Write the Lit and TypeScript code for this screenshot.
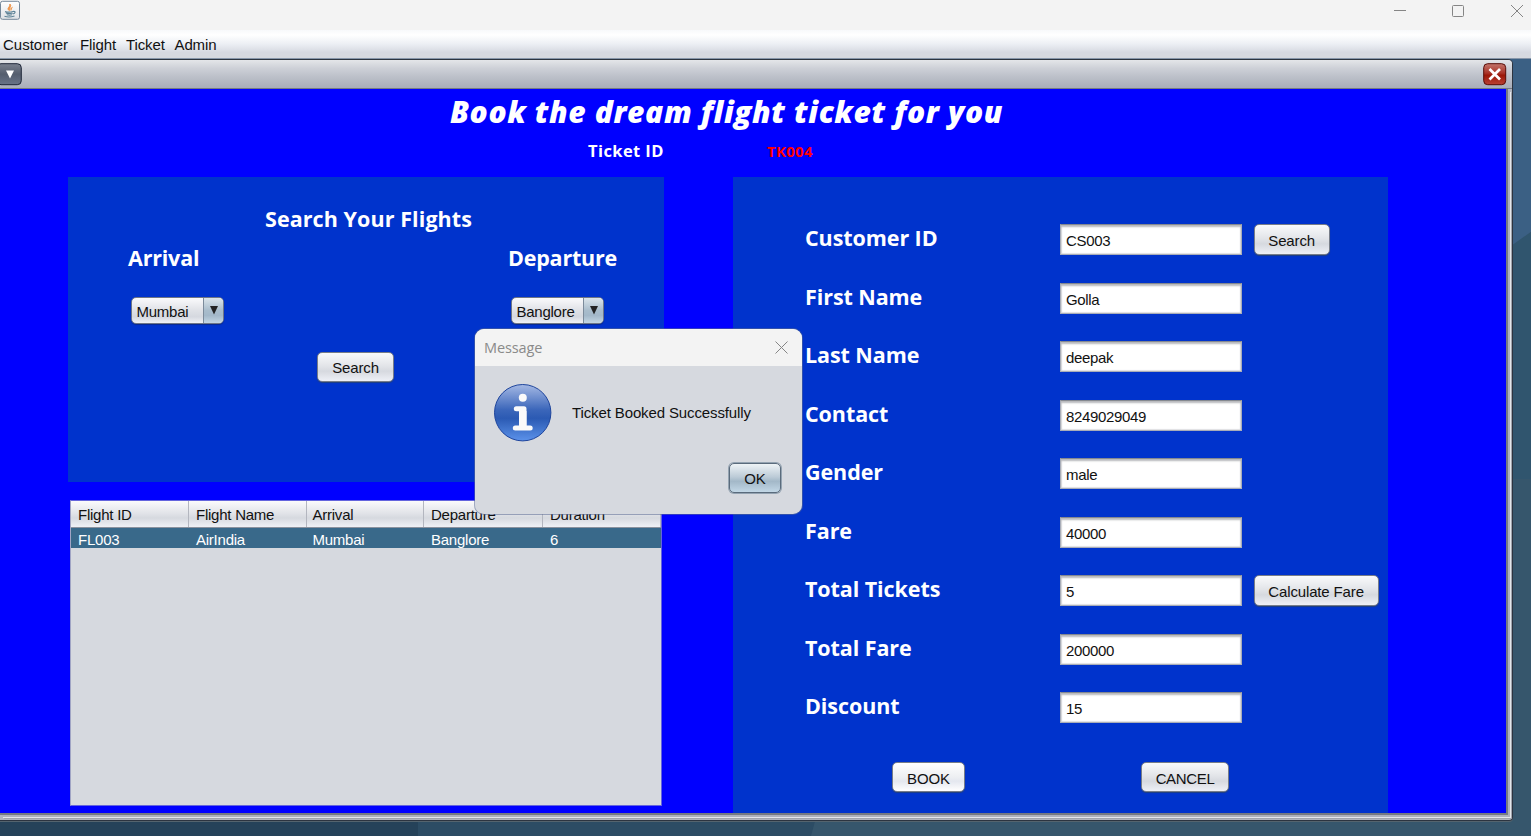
import { LitElement, html, css, svg } from "lit";
import { customElement } from "lit/decorators.js";

const FIELDS: { label: string; value: string; action?: string }[] = [
  { label: "Customer ID", value: "CS003", action: "Search" },
  { label: "First Name", value: "Golla" },
  { label: "Last Name", value: "deepak" },
  { label: "Contact", value: "8249029049" },
  { label: "Gender", value: "male" },
  { label: "Fare", value: "40000" },
  { label: "Total Tickets", value: "5", action: "Calculate Fare" },
  { label: "Total Fare", value: "200000" },
  { label: "Discount", value: "15" },
];
const HEADS = ["Flight ID", "Flight Name", "Arrival", "Departure", "Duration"];
const ROW = ["FL003", "AirIndia", "Mumbai", "Banglore", "6"];
const arrow = svg`<path d="M0 0H8L4 8.5Z" fill="#222"/>`;

@customElement("app-root")
export class AppRoot extends LitElement {
  static styles = css`
    :host { display: block; width: 1531px; height: 836px; overflow: hidden; font: 15px/18px "Liberation Sans", Arial, sans-serif; color: #111; }
    * { box-sizing: border-box; }
    svg { display: block; }
    .app { position: relative; height: 836px; display: flex; flex-direction: column; }
    .titlebar { height: 30px; background: #f3f3f3; display: flex; justify-content: space-between; }
    .controls { display: flex; gap: 46px; padding: 5px 8px 0 0; }
    .controls svg { overflow: visible; }
    .menubar { height: 29px; padding: 6px 0 0 3px; display: flex; border-bottom: 1px solid #8796aa; background: linear-gradient(#f8f9fb 0, #fff 18%, #eceff4 50%, #d6d9e1 80%, #d6d9df 100%); white-space: nowrap; letter-spacing: -0.12px; }
    .menubar span:nth-child(1) { width: 77px; letter-spacing: 0; }
    .menubar span:nth-child(2) { width: 46px; }
    .menubar span:nth-child(3) { width: 48.5px; }
    .desktop { flex: 1; position: relative; overflow: hidden; background: #36566e; }
    .wall { position: absolute; inset: 0; }
    .frame { position: relative; width: 1513px; height: 762px; border: solid #2c3440; border-width: 1px 1px 1px 0; border-radius: 0 5px 4px 0; background: #b0b4bf; box-shadow: 0 1px 0 #54646e; overflow: hidden; padding-right: 4px; }
    .frame-title { height: 29px; margin-right: -4px; display: flex; justify-content: space-between; padding: 3px 5px 0 0; background: linear-gradient(#e4e6e9 0, #cdd0d7 30%, #bcc0c9 60%, #a9aeb9 100%); border-bottom: 1px solid #757a84; }
    .content { height: 726px; border: solid #767a82; border-width: 0 2px 2px 0; background: #00f; display: grid; grid-template-columns: 596px 655px; grid-template-rows: 88px 636px; column-gap: 69px; padding-left: 68px; color: #fff; font-family: "Open Sans", "Noto Sans", sans-serif; font-weight: 700; box-shadow: 2px 2px 0 #adb1bc, 3px 3px 0 #e4e6ea, 4px 4px 0 #a0a4ad; }
    .banner { grid-column: 1 / 3; }
    .headline { font-style: italic; font-weight: 800; font-size: 30px; line-height: 40px; letter-spacing: 0.6px; padding: 3px 0 0 382px; white-space: nowrap; }
    .ticket { display: flex; padding: 8px 0 0 520px; line-height: 22px; font-size: 16.5px; }
    .ticket span { width: 179px; white-space: nowrap; letter-spacing: 0.4px; }
    .ticket .code { color: #f00; font-size: 15px; letter-spacing: 0.3px; }
    .left { display: flex; flex-direction: column; gap: 17px; }
    .search { height: 305px; background: #03c; font-size: 21.5px; line-height: 30px; display: flex; flex-direction: column; letter-spacing: -0.2px; }
    .search h2 { margin: 0; font: inherit; padding: 27px 0 0 197px; white-space: nowrap; letter-spacing: 0.08px; }
    .places { display: flex; padding: 9px 0 0 60px; gap: 287px; }
    .places > div { width: 93px; display: flex; flex-direction: column; gap: 24px; white-space: nowrap; }
    .combo { width: 93px; height: 27px; margin-left: 3px; border: 1px solid #6e7686; border-radius: 5px; display: flex; overflow: hidden; font: 15px/28px "Liberation Sans", Arial, sans-serif; letter-spacing: -0.25px; color: #111; background: linear-gradient(#fafafc, #dfe1e6 50%, #d5d8df 75%, #f0f2f6); box-shadow: 0 1px 1px #0a2a8c; padding-left: 4.5px; }
    .combo span { flex: 1; }
    .combo i { width: 20px; padding: 8px 0 0 6px; border-left: 1px solid #7c8b9b; background: linear-gradient(#dce5eb, #a8bccb 50%, #a3b8c9 70%, #c3d6e4); }
    .btn { height: 30px; border: 1px solid #777d88; border-radius: 5px; font: 15px/31px "Liberation Sans", Arial, sans-serif; letter-spacing: -0.14px; color: #111; text-align: center; white-space: nowrap; background: linear-gradient(#f9fafb 0, #e3e5e9 45%, #d6d9df 65%, #eef0f6 100%); box-shadow: 0 1px 1px #21417f; }
    .search .btn { width: 77px; margin: 28px 0 0 249px; line-height: 30px; }
    .table { height: 306px; width: 592px; margin: 1px 0 0 2px; background: #d6d9df; border: 1px solid #6464de; border-left: 1px solid #a0a4c4; font: 15px/18px "Liberation Sans", Arial, sans-serif; letter-spacing: -0.24px; color: #111; }
    .tr { display: grid; grid-template-columns: 118px 118px 117px 119px 1fr; }
    .tr span { padding-left: 7px; white-space: nowrap; }
    .tr span:nth-child(3) { padding-left: 5.5px; }
    .th { height: 27px; overflow: hidden; border-bottom: 1px solid #8b929e; background: linear-gradient(#fbfbfc, #e1e3e8 48%, #d6d9df 65%, #eff1f6); line-height: 28px; }
    .th span { border-right: 1px solid #b3b6bf; }
    .td { height: 20px; background: #39698a; color: #fff; line-height: 24px; overflow: hidden; }
    .form { background: #03c; padding: 47.1px 0 0 72px; }
    .row { height: 58.56px; display: grid; grid-template-columns: 255px 182px 1fr; align-items: start; }
    .row label { font-size: 21.5px; line-height: 28px; letter-spacing: -0.08px; white-space: nowrap; }
    .field { height: 31px; border: 1px solid #a8adb8; border-top-color: #858990; background: #fff; box-shadow: inset 0 2px 2px #b8b9bc, inset 0 0 1px 1px #e0e0e3; font: 15px/32px "Liberation Sans", Arial, sans-serif; letter-spacing: -0.33px; color: #111; padding-left: 5px; }
    .row .btn { justify-self: start; margin-left: 11.5px; padding: 0 13.8px; height: 31px; }
    .actions { display: flex; gap: 176px; padding: 11px 0 0 87px; }
    .actions .btn { width: 73px; }
    .actions .btn + .btn { width: 88px; letter-spacing: -0.35px; }
    .actions .hot { background: linear-gradient(#fff, #edeff2 50%, #e4e7ef 65%, #fff); }
    .dialog { position: absolute; left: 475px; top: 329px; width: 327px; height: 185px; border-radius: 9px; background: #d6d9df; overflow: hidden; box-shadow: 0 0 0 1px rgba(90, 105, 145, 0.55); }
    .dialog header { height: 37px; background: #f3f3f3; color: #8a8a8a; display: flex; justify-content: space-between; padding: 9px 14.5px 0 9px; font: 14.5px/19px "Open Sans", "Noto Sans", sans-serif; letter-spacing: -0.1px; }
    .dialog header svg { margin-top: 3px; }
    .message { display: flex; gap: 19px; padding: 17px 0 0 18px; line-height: 60px; white-space: nowrap; letter-spacing: -0.12px; }
    .ok { width: 52px; margin: 20px 0 0 254px; line-height: 29px; border: 1px solid #5a6b7c; background: linear-gradient(#eef3f6, #bccbd7 46%, #a3b8c8 62%, #c2d7e6); box-shadow: 0 0 0 1px #94a3b1; }
  `;

  render() {
    return html`<div class="app">
      <div class="titlebar">
        <svg width="21" height="21" viewBox="0 0 21 21">
          <defs><linearGradient id="jb" x1="0" y1="0" x2="0" y2="1"><stop stop-color="#fff" /><stop offset="1" stop-color="#dfe2e6" /></linearGradient></defs>
          <rect x=".5" y="1.3" width="19" height="18" rx="2" fill="url(#jb)" stroke="#75889a" />
          <path d="M9.4 10.6C5.6 8.6 10.8 6.8 9.8 4C12.4 6 8.4 7.8 10 10.6M11.2 10.3C10.4 8.6 11 8 12.5 7.2" fill="#ee9448" stroke="#ee9448" />
          <path d="M5 11.6Q9 12.8 13 11.5M6 13Q9 14.4 12.5 13M6.8 14.8Q9.5 15.7 12 14.8M13 11.5C16 11 15.5 13.5 12.8 14M4.5 16.2Q9 17.8 14.5 16" fill="none" stroke="#5d8296" stroke-width="1.15" />
        </svg>
        <div class="controls">
          <svg width="12" height="12" stroke="#858585" fill="none"><path d="M-1 5.5H11" /></svg>
          <svg width="12" height="12" stroke="#858585" fill="none"><rect x="-.5" y=".5" width="11" height="11" rx="1" /></svg>
          <svg width="12" height="12" stroke="#858585" fill="none"><path d="M0 0L12 12M12 0L0 12" /></svg>
        </div>
      </div>
      <div class="menubar"><span>Customer</span><span>Flight</span><span>Ticket</span><span>Admin</span></div>
      <div class="desktop">
        <svg class="wall" width="1531" height="777">
          <rect width="1531" height="777" fill="#36566c" />
          <path d="M1500 0H1531V173L1500 195Z" fill="#3b6084" />
          <path d="M1500 195L1531 173V777H1500Z" fill="#30556e" />
          <path d="M1500 420H1531V777H1500Z" fill="#36566c" />
          <path d="M0 755H418V777H0Z" fill="#254259" />
          <path d="M418 755H817L811 777H418Z" fill="#2c4c64" />
        </svg>
        <div class="frame">
          <div class="frame-title">
            <svg width="22" height="23" viewBox="0 0 22 23">
              <defs><linearGradient id="mb" x1="0" y1="0" x2="0" y2="1"><stop stop-color="#7a818e" /><stop offset=".5" stop-color="#555e6e" /><stop offset="1" stop-color="#687387" /></linearGradient></defs>
              <rect x="-3" y=".7" width="24.3" height="21" rx="4" fill="url(#mb)" stroke="#20293a" />
              <path d="M6 7.5H14L10 15.5Z" fill="#fff" />
            </svg>
            <svg width="24" height="23" viewBox="0 0 24 23">
              <defs><linearGradient id="cb" x1="0" y1="0" x2="0" y2="1"><stop stop-color="#c4776d" /><stop offset=".45" stop-color="#a93328" /><stop offset=".55" stop-color="#9b1708" /><stop offset="1" stop-color="#bb4134" /></linearGradient></defs>
              <rect x=".7" y=".7" width="22" height="21" rx="4" fill="url(#cb)" stroke="#580d08" />
              <path d="M6.5 6L17 16.5M17 6L6.5 16.5" stroke="#fff" stroke-width="2.7" />
            </svg>
          </div>
          <div class="content">
            <div class="banner">
              <div class="headline">Book the dream flight ticket for you</div>
              <div class="ticket"><span>Ticket ID</span><span class="code">TK004</span></div>
            </div>
            <div class="left">
              <div class="search">
                <h2>Search Your Flights</h2>
                <div class="places">
                  ${[["Arrival", "Mumbai"], ["Departure", "Banglore"]].map(([l, v]) => html`<div>${l}
                    <div class="combo"><span>${v}</span><i><svg width="8" height="9">${arrow}</svg></i></div></div>`)}
                </div>
                <div class="btn">Search</div>
              </div>
              <div class="table">
                <div class="tr th">${HEADS.map((h) => html`<span>${h}</span>`)}</div>
                <div class="tr td">${ROW.map((c) => html`<span>${c}</span>`)}</div>
              </div>
            </div>
            <div class="form">
              ${FIELDS.map((f) => html`<div class="row"><label>${f.label}</label><div class="field">${f.value}</div>${f.action ? html`<div class="btn">${f.action}</div>` : ""}</div>`)}
              <div class="actions"><div class="btn hot">BOOK</div><div class="btn">CANCEL</div></div>
            </div>
          </div>
        </div>
      </div>
      <div class="dialog">
        <header><span>Message</span><svg width="13" height="13" stroke="#858585"><path d="M.5 .5L12.5 12.5M12.5 .5L.5 12.5" /></svg></header>
        <div class="message">
          <svg width="60" height="60" viewBox="0 0 60 60">
            <defs><linearGradient id="ib" x1="0" y1="0" x2="0" y2="1"><stop stop-color="#a5b9e4" /><stop offset=".45" stop-color="#3b66ba" /><stop offset=".6" stop-color="#2b5ab3" /><stop offset="1" stop-color="#5c92ea" /></linearGradient></defs>
            <circle cx="29.7" cy="29.7" r="28.2" fill="url(#ib)" stroke="#1f459c" />
            <circle cx="29.8" cy="14.8" r="4" fill="#fafafa" />
            <path d="M23.3 25.7H31V45M22.3 45H37.2" fill="none" stroke="#fafafa" stroke-width="5" stroke-linecap="round" stroke-linejoin="round" />
            <path d="M26 28H33.5V45H26Z" fill="#fafafa" />
          </svg>
          <span>Ticket Booked Successfully</span>
        </div>
        <div class="btn ok">OK</div>
      </div>
    </div>`;
  }
}
